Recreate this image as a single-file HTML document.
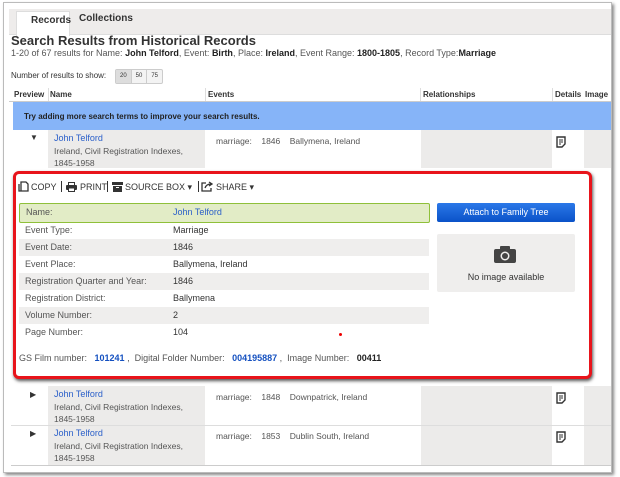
<!DOCTYPE html>
<html><head><style>
body{margin:0;width:620px;height:477px;background:#fff;font-family:"Liberation Sans",sans-serif;position:relative;overflow:hidden;color:#333}
.a{position:absolute}
.frame{left:3px;top:2px;width:607px;height:469px;border:1px solid #bbb;box-shadow:2px 2px 3px #888;background:#fff}
.t{font-size:9px;white-space:nowrap}
.lnk{color:#2a5fc9}
</style></head><body>
<div class="a frame"></div>
<div class="a" style="left:9px;top:9px;width:602px;height:25px;background:#eeeceb;border-bottom:1px solid #ddd"></div>
<div class="a" style="left:16px;top:11px;width:52px;height:24px;background:#fff;border:1px solid #ddd;border-bottom:none"></div>
<div class="a t" style="left:31px;top:15px;font-size:10px;font-weight:bold">Records</div>
<div class="a t" style="left:79px;top:13px;font-size:10px;font-weight:bold">Collections</div>
<div class="a t" style="left:11px;top:33px;font-size:13px;font-weight:bold;color:#333">Search Results from Historical Records</div>
<div class="a t" style="left:11px;top:48px;font-size:9px;color:#555">1-20 of 67 results for Name: <b style="color:#222">John Telford</b>, Event: <b style="color:#222">Birth</b>, Place: <b style="color:#222">Ireland</b>, Event Range: <b style="color:#222">1800-1805</b>, Record Type:<b style="color:#222">Marriage</b></div>
<div class="a t" style="left:11px;top:71px;font-size:8px">Number of results to show:</div>
<div class="a" style="left:115px;top:69px;width:46px;height:13px;border:1px solid #ccc;background:#f3f3f3;font-size:6px;display:flex;border-radius:2px">
<span style="flex:1;text-align:center;line-height:13px;background:#ddd;border-right:1px solid #ccc">20</span><span style="flex:1;text-align:center;line-height:13px;border-right:1px solid #ccc">50</span><span style="flex:1;text-align:center;line-height:13px">75</span></div>
<div class="a" style="left:9px;top:88px;width:602px;height:13px;border-bottom:1px solid #ccc"></div>
<div class="a" style="left:48px;top:88px;width:1px;height:13px;background:#ddd"></div>
<div class="a" style="left:205px;top:88px;width:1px;height:13px;background:#ddd"></div>
<div class="a" style="left:420px;top:88px;width:1px;height:13px;background:#ddd"></div>
<div class="a" style="left:552px;top:88px;width:1px;height:13px;background:#ddd"></div>
<div class="a t" style="left:14px;top:90px;font-size:8px;font-weight:bold">Preview</div>
<div class="a t" style="left:50px;top:90px;font-size:8px;font-weight:bold">Name</div>
<div class="a t" style="left:208px;top:90px;font-size:8px;font-weight:bold">Events</div>
<div class="a t" style="left:423px;top:90px;font-size:8px;font-weight:bold">Relationships</div>
<div class="a t" style="left:555px;top:90px;font-size:8px;font-weight:bold">Details</div>
<div class="a t" style="left:585px;top:90px;font-size:8px;font-weight:bold">Image</div>
<div class="a" style="left:13px;top:102px;width:598px;height:28px;background:#86b4f8"></div>
<div class="a t" style="left:24px;top:112px;font-size:8px;font-weight:bold;color:#222">Try adding more search terms to improve your search results.</div>

<svg width="0" height="0" style="position:absolute"><defs><symbol id="doc" viewBox="0 0 10 12"><path d="M1 1h8v7l-3 3H1z" fill="none" stroke="#333" stroke-width="1.4"/><path d="M3 4h4M3 6h4M3 8h2" stroke="#333" stroke-width="1"/></symbol></defs></svg>

<div class="a" style="left:48px;top:130px;width:157px;height:38px;background:#ecebea"></div>
<div class="a" style="left:421px;top:130px;width:131px;height:38px;background:#ecebea"></div>
<div class="a" style="left:584px;top:130px;width:27px;height:38px;background:#ecebea"></div>
<div class="a t" style="left:30px;top:133px;font-size:8px">▼</div>
<div class="a t lnk" style="left:54px;top:133px">John Telford</div>
<div class="a t" style="left:54px;top:145px;font-size:8.5px;color:#555;line-height:12px">Ireland, Civil Registration Indexes,<br>1845-1958</div>
<div class="a t" style="left:216px;top:136px;font-size:8.5px;color:#555">marriage:&nbsp;&nbsp;&nbsp;&nbsp;1846&nbsp;&nbsp;&nbsp;&nbsp;Ballymena, Ireland</div>
<svg class="a" style="left:556px;top:136px" width="10" height="12"><use href="#doc"/></svg>

<div class="a" style="left:48px;top:386px;width:157px;height:79px;background:#ecebea"></div>
<div class="a" style="left:421px;top:386px;width:131px;height:79px;background:#ecebea"></div>
<div class="a" style="left:584px;top:386px;width:27px;height:79px;background:#ecebea"></div>
<div class="a" style="left:11px;top:425px;width:600px;height:1px;background:#ddd"></div>
<div class="a" style="left:11px;top:465px;width:600px;height:1px;background:#ccc"></div>
<div class="a t" style="left:30px;top:390px;font-size:8px">▶</div>
<div class="a t lnk" style="left:54px;top:389px">John Telford</div>
<div class="a t" style="left:54px;top:401px;font-size:8.5px;color:#555;line-height:12px">Ireland, Civil Registration Indexes,<br>1845-1958</div>
<div class="a t" style="left:216px;top:392px;font-size:8.5px;color:#555">marriage:&nbsp;&nbsp;&nbsp;&nbsp;1848&nbsp;&nbsp;&nbsp;&nbsp;Downpatrick, Ireland</div>
<svg class="a" style="left:556px;top:392px" width="10" height="12"><use href="#doc"/></svg>
<div class="a t" style="left:30px;top:429px;font-size:8px">▶</div>
<div class="a t lnk" style="left:54px;top:428px">John Telford</div>
<div class="a t" style="left:54px;top:440px;font-size:8.5px;color:#555;line-height:12px">Ireland, Civil Registration Indexes,<br>1845-1958</div>
<div class="a t" style="left:216px;top:431px;font-size:8.5px;color:#555">marriage:&nbsp;&nbsp;&nbsp;&nbsp;1853&nbsp;&nbsp;&nbsp;&nbsp;Dublin South, Ireland</div>
<svg class="a" style="left:556px;top:431px" width="10" height="12"><use href="#doc"/></svg>

<div class="a" style="left:13px;top:171px;width:573px;height:202px;border:3px solid #e8141b;border-radius:6px;box-shadow:1px 2px 3px #555;background:#fff"></div>
<svg class="a" style="left:18px;top:181px" width="11" height="11"><path d="M3 1h5l2 2v7H3z M1 3v7h2" fill="none" stroke="#333" stroke-width="1.3"/></svg>
<div class="a t" style="left:31px;top:182px;font-size:9px;color:#333">COPY</div>
<div class="a" style="left:61px;top:181px;width:1px;height:11px;background:#333"></div>
<svg class="a" style="left:66px;top:182px" width="11" height="10"><rect x="2.5" y="0.5" width="6" height="3" fill="none" stroke="#333"/><rect x="0" y="3" width="11" height="5" rx="1" fill="#333"/><rect x="2.5" y="6" width="6" height="3.5" fill="#fff" stroke="#333"/></svg>
<div class="a t" style="left:80px;top:182px;font-size:9px;color:#333">PRINT</div>
<div class="a" style="left:107px;top:181px;width:1px;height:11px;background:#333"></div>
<svg class="a" style="left:112px;top:182px" width="11" height="10"><rect x="0" y="0" width="11" height="3" fill="#333"/><rect x="1" y="4" width="9" height="6" fill="#333"/><rect x="4" y="5" width="3" height="1" fill="#fff"/></svg>
<div class="a t" style="left:125px;top:182px;font-size:9px;color:#333">SOURCE BOX ▾</div>
<div class="a" style="left:198px;top:181px;width:1px;height:11px;background:#333"></div>
<svg class="a" style="left:201px;top:181px" width="12" height="11"><path d="M5 2H1v8h9V7" fill="none" stroke="#333" stroke-width="1.3"/><path d="M4 7c1-3 3-4 6-4M8 1l3 2-3 2" fill="none" stroke="#333" stroke-width="1.3"/></svg>
<div class="a t" style="left:216px;top:182px;font-size:9px;color:#333">SHARE ▾</div>
<div class="a" style="left:19px;top:239px;width:410px;height:17px;background:#efeeed"></div>
<div class="a" style="left:19px;top:273px;width:410px;height:17px;background:#efeeed"></div>
<div class="a" style="left:19px;top:307px;width:410px;height:17px;background:#efeeed"></div>
<div class="a" style="left:19px;top:203px;width:409px;height:18px;background:#e2ecc6;border:1px solid #8fc03a;border-radius:2px"></div>
<div class="a t" style="left:26px;top:207px;color:#555">Name:</div>
<div class="a t lnk" style="left:173px;top:207px">John Telford</div>
<div class="a t" style="left:25px;top:225px;color:#555">Event Type:</div><div class="a t" style="left:173px;top:225px">Marriage</div>
<div class="a t" style="left:25px;top:242px;color:#555">Event Date:</div><div class="a t" style="left:173px;top:242px">1846</div>
<div class="a t" style="left:25px;top:259px;color:#555">Event Place:</div><div class="a t" style="left:173px;top:259px">Ballymena, Ireland</div>
<div class="a t" style="left:25px;top:276px;color:#555">Registration Quarter and Year:</div><div class="a t" style="left:173px;top:276px">1846</div>
<div class="a t" style="left:25px;top:293px;color:#555">Registration District:</div><div class="a t" style="left:173px;top:293px">Ballymena</div>
<div class="a t" style="left:25px;top:310px;color:#555">Volume Number:</div><div class="a t" style="left:173px;top:310px">2</div>
<div class="a t" style="left:25px;top:327px;color:#555">Page Number:</div><div class="a t" style="left:173px;top:327px">104</div>
<div class="a" style="left:339px;top:333px;width:3px;height:3px;background:#e00;border-radius:50%"></div>
<div class="a t" style="left:19px;top:353px;color:#555">GS Film number: &nbsp;&nbsp;<b style="color:#1450c0">101241</b> , &nbsp;Digital Folder Number: &nbsp;&nbsp;<b style="color:#1450c0">004195887</b> , &nbsp;Image Number: &nbsp;&nbsp;<b style="color:#222">00411</b></div>
<div class="a" style="left:437px;top:203px;width:138px;height:19px;background:linear-gradient(#2b78e8,#0a52c8);border-radius:2px;color:#fff;font-size:9px;text-align:center;line-height:19px">Attach to Family Tree</div>
<div class="a" style="left:437px;top:234px;width:138px;height:58px;background:#efeeed;border-radius:2px"></div>
<svg class="a" style="left:494px;top:246px" width="22" height="17" viewBox="0 0 22 17"><rect x="0" y="3" width="22" height="14" rx="2" fill="#444"/><rect x="6" y="0" width="10" height="4" rx="1" fill="#444"/><circle cx="11" cy="10" r="4.5" fill="#efeeed"/><circle cx="11" cy="10" r="3" fill="#444"/></svg>
<div class="a t" style="left:437px;top:272px;width:138px;text-align:center;color:#333">No image available</div>
</body></html>
